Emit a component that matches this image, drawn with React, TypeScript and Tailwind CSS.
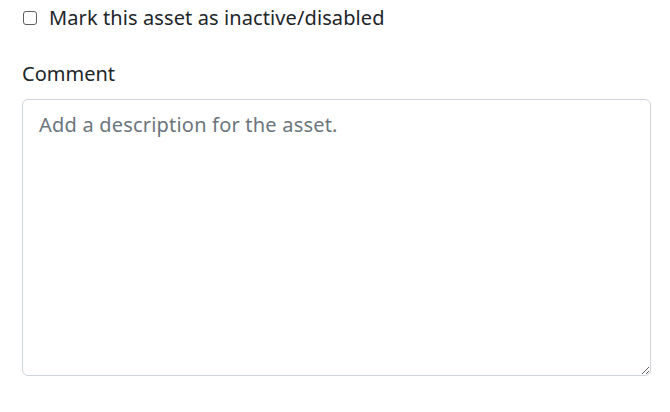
import React from 'react';

const App: React.FC = () => {
  return (
    <div className="h-[412px] w-[670px] bg-white pl-[22px] pt-[4px] text-[#212529]" style={{ fontFamily: '"Noto Sans", "Open Sans", sans-serif' }}>
      <label className="flex h-[28px] items-center text-[20px]">
        <input
          type="checkbox"
          className="m-0 ml-[1px] mr-[12px] h-[14px] w-[14px] appearance-none rounded-[3px] border border-[#5f5f5f] bg-white"
        />
        <span className="tracking-[0.1px]">Mark this asset as inactive/disabled</span>
      </label>
      <div className="mt-[27px] h-[30px] text-[20px] leading-[30px]">Comment</div>
      <textarea
        placeholder="Add a description for the asset."
        className="mt-[10px] block h-[277px] w-[629px] rounded-[6px] border border-[#ced4da] px-4 pb-[8px] pt-[10px] text-[20px] leading-[30px] tracking-[0.2px] placeholder:text-[#6c757d] focus:outline-none"
      />
    </div>
  );
};

export default App;
